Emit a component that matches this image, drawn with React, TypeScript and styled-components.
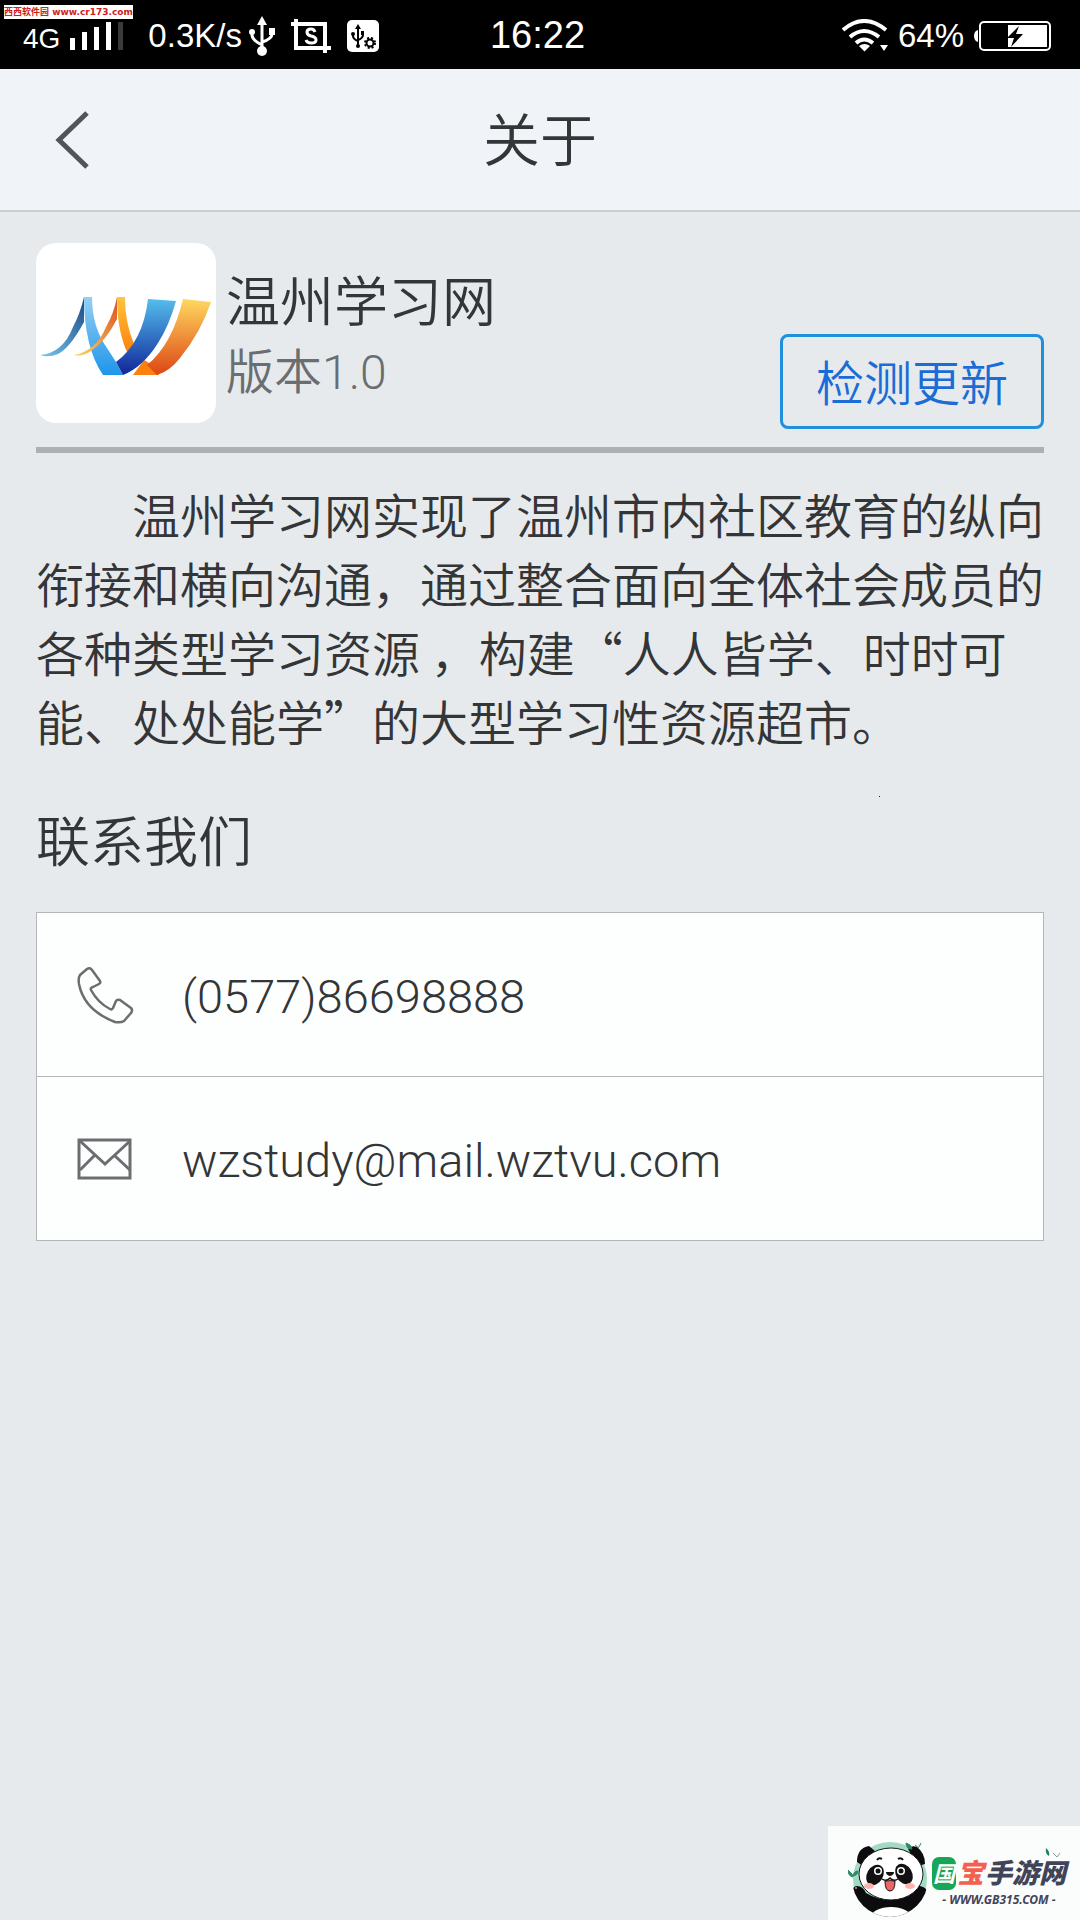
import React from 'react';
import styled, { createGlobalStyle } from 'styled-components';

const GlobalStyle = createGlobalStyle`
  * {
    box-sizing: border-box;
  }

  body {
    margin: 0;
    background: #e6eaed;
    color: #333537;
    font-family: Roboto, 'Noto Sans CJK SC', sans-serif;
    font-weight: 350;
  }
`;

const Page = styled.div`
  position: relative;
  display: flex;
  flex-direction: column;
  min-height: 100vh;
`;

const StatusBar = styled.div`
  display: flex;
  align-items: center;
  justify-content: space-between;
  height: 69px;
  padding: 2px 28px 0 23px;
  background: #000;
  color: #fff;
  font-family: 'Liberation Sans', sans-serif;
  font-weight: 400;
  font-size: 33px;
`;

const StatusGroup = styled.div<{ $end?: boolean }>`
  display: flex;
  flex: 1;
  align-items: center;
  justify-content: ${({ $end }) => ($end ? 'flex-end' : 'flex-start')};
  gap: 10px;
`;

const Network = styled.span`
  padding-top: 6px;
  font-size: 28px;
`;

const Speed = styled.span`
  padding-left: 14px;
`;

const StatusIcons = styled.div`
  display: flex;
  align-items: center;
  gap: 16px;
  margin-left: -3px;
`;

const Clock = styled.span`
  font-size: 38px;
`;

const SourceBadge = styled.div`
  position: absolute;
  top: 5px;
  left: 4px;
  background: #fff;
  color: #d0201c;
  font-family: 'DejaVu Sans', 'Noto Sans CJK SC', sans-serif;
  font-size: 9px;
  font-weight: 700;
  line-height: 14px;
  white-space: nowrap;
`;

const Header = styled.header`
  display: grid;
  grid-template-columns: 1fr auto 1fr;
  align-items: center;
  height: 143px;
  padding: 0 36px;
  background: #f0f3f8;
  border-bottom: 2px solid #cbcfd2;
`;

const BackButton = styled.button`
  display: flex;
  justify-self: start;
  padding: 12px 16px;
  background: none;
  border: none;
  cursor: pointer;
`;

const Title = styled.h1`
  margin: 0;
  padding-top: 4px;
  font-size: 57px;
  font-weight: inherit;
  line-height: 72px;
`;

const Content = styled.main`
  padding: 31px 36px;
`;

const AppInfo = styled.section`
  display: flex;
  gap: 10px;
  padding-bottom: 24px;
  border-bottom: 6px solid #adb0b2;
`;

const LogoCard = styled.div`
  width: 180px;
  height: 180px;
  background: #fff;
  border-radius: 20px;
`;

const AppText = styled.div`
  flex: 1;
  padding-top: 25px;
`;

const AppName = styled.h2`
  margin: 0;
  font-size: 54px;
  font-weight: inherit;
  line-height: 72px;
`;

const Version = styled.p`
  margin: 0;
  color: #6b6e70;
  font-size: 48px;
  line-height: 66px;
`;

const UpdateButton = styled.button`
  align-self: flex-end;
  height: 95px;
  margin-bottom: -6px;
  padding: 0 33px 4px;
  background: none;
  border: 3px solid #1f90dc;
  border-radius: 8px;
  color: #1a6cd6;
  font: inherit;
  font-size: 48px;
  cursor: pointer;
`;

const Description = styled.p`
  margin: 26px 0 0;
  font-family: 'Noto Sans CJK SC', sans-serif;
  font-size: 48px;
  line-height: 69px;
  text-indent: 2em;
`;

const ContactHeading = styled.div`
  display: flex;
  align-items: flex-start;
  justify-content: space-between;
  margin-top: 41px;
  padding-right: 164px;
`;

const Speck = styled.span`
  width: 1px;
  height: 1px;
  background: #101080;
`;

const ContactTitle = styled.h2`
  margin: 12px 0 0;
  font-size: 54px;
  font-weight: inherit;
  line-height: 72px;
`;

const ContactList = styled.div`
  margin-top: 32px;
  background: #fdfefe;
  border: 1px solid #b4b7b9;
`;

const ContactRow = styled.a`
  display: flex;
  align-items: center;
  gap: 48px;
  height: 163px;
  padding: 0 39px;
  color: inherit;
  font-size: 47px;
  text-decoration: none;

  & + & {
    border-top: 1px solid #b4b7b9;
    height: 164px;
  }
`;

const ContactValue = styled.span`
  padding-top: 4px;
  font-weight: 300;
`;

const SiteMark = styled.div`
  position: absolute;
  right: 0;
  bottom: 0;
  display: flex;
  align-items: flex-start;
  height: 94px;
  padding: 12px 14px 0 20px;
  background: #fbfcfc;
`;

const SiteText = styled.div`
  display: flex;
  flex-direction: column;
  align-items: center;
  padding-top: 17px;
  color: #414459;
  font-family: 'Noto Sans', 'Noto Sans CJK SC', sans-serif;
  font-style: italic;
  font-weight: 700;
`;

const SiteName = styled.div`
  display: flex;
  align-items: center;
  gap: 1px;
  font-size: 27px;
  font-weight: 900;
  line-height: 36px;
`;

const GreenTile = styled.span`
  padding: 0 1px;
  background: #18a558;
  border-radius: 7px;
  color: #fff;
  font-size: 22px;
  font-weight: 700;
  line-height: 33px;
`;

const RedChar = styled.span`
  color: #f4604f;
`;

const SiteUrl = styled.div`
  font-size: 12px;
  line-height: 18px;
`;

const LeafMark = styled.svg`
  position: absolute;
  top: 21px;
  right: 18px;
`;

const SignalIcon = () => (
  <svg width="54" height="28" viewBox="0 0 54 28" fill="#fff" aria-hidden="true">
    <rect x="0" y="16" width="5" height="12" />
    <rect x="12" y="10" width="5" height="18" />
    <rect x="24" y="5" width="5" height="23" />
    <rect x="36" y="0" width="5" height="28" />
    <rect x="48" y="0" width="5" height="28" fill="#3a3a3a" />
  </svg>
);

const UsbIcon = () => (
  <svg width="26" height="40" viewBox="0 0 26 40" aria-hidden="true">
    <path d="M13 8v26M3 16v3q0 5 10 10M23 16v2q0 5-10 8" fill="none" stroke="#fff" strokeWidth="3" />
    <path d="M13 0l5 9H8z" fill="#fff" />
    <circle cx="13" cy="35" r="5" fill="#fff" />
    <circle cx="3" cy="16" r="3" fill="#fff" />
    <rect x="20" y="12" width="6" height="7" fill="#fff" />
  </svg>
);

const ScreenshotIcon = () => (
  <svg width="40" height="34" viewBox="0 0 40 34" fill="none" stroke="#fff" aria-hidden="true">
    <path d="M0 5h34v29M5 0v29h35" strokeWidth="4" />
    <path d="M24 13q-1-3-4-3-4 0-4 3 0 3 4 4 5 1 5 4 0 3-5 3-4 0-5-3" strokeWidth="3" />
  </svg>
);

const UsbSettingsIcon = () => (
  <svg width="32" height="32" viewBox="0 0 32 32" aria-hidden="true">
    <rect width="32" height="32" rx="5" fill="#fff" />
    <path d="M11 8v17M6 14v2q0 3 5 5M16 13v2q0 3-5 5" fill="none" stroke="#000" strokeWidth="2" />
    <path d="M11 4l3 5H8z" />
    <circle cx="11" cy="26" r="2" />
    <circle cx="6" cy="14" r="2" />
    <rect x="14" y="11" width="3" height="4" />
    <circle cx="23" cy="23" r="3.500" fill="none" stroke="#000" strokeWidth="2" />
    <circle cx="23" cy="23" r="5" fill="none" stroke="#000" strokeWidth="2" strokeDasharray="2 2" />
  </svg>
);

const WifiIcon = () => (
  <svg width="46" height="33" viewBox="0 0 46 33" fill="none" stroke="#fff" strokeWidth="4" aria-hidden="true">
    <path d="M1 11Q22-7 44 11" />
    <path d="M8 18Q22 6 37 18" />
    <path d="M14 24Q22 17 31 24" />
    <path d="M17 27q5.500-4 11 0l-5.500 5.500z" fill="#fff" stroke="none" />
    <path d="M38 26h8l-4 6z" fill="#fff" stroke="none" />
  </svg>
);

const BatteryIcon = () => (
  <svg width="78" height="30" viewBox="0 0 78 30" aria-hidden="true">
    <path d="M4 9v12q-4-1-4-6t4-6z" fill="#fff" />
    <rect x="6" y="1" width="70" height="28" rx="4" fill="none" stroke="#fff" strokeWidth="2" />
    <rect x="34" y="4" width="39" height="22" fill="#fff" />
    <path d="M45 5L33 17h7l-3 9 12-13h-7z" />
  </svg>
);

const BackIcon = () => (
  <svg width="38" height="58" viewBox="0 0 38 58" fill="none" stroke="#515558" strokeWidth="5" aria-hidden="true">
    <path d="M35 2L7 29l28 27" />
  </svg>
);

const LogoIcon = () => (
  <svg width="180" height="180" viewBox="0 0 180 180" role="img" aria-label="温州学习网">
    <defs>
      <linearGradient id="deepBlue" x1="0" y1="0" x2="0" y2="1">
        <stop offset="0" stopColor="#55bdec" />
        <stop offset="1" stopColor="#10259a" />
      </linearGradient>
      <linearGradient id="orange" x1="0" y1="0" x2="0" y2="1">
        <stop offset="0" stopColor="#ffd95f" />
        <stop offset="1" stopColor="#dd4514" />
      </linearGradient>
      <linearGradient id="sky" x1="0" y1="0" x2="0" y2="1">
        <stop offset="0" stopColor="#94cff5" />
        <stop offset="1" stopColor="#1d96ea" />
      </linearGradient>
      <linearGradient id="blueTail" x1="0" y1="1" x2="1" y2="0">
        <stop offset="0" stopColor="#77c8f2" />
        <stop offset="1" stopColor="#1b4a83" />
      </linearGradient>
      <linearGradient id="orangeTail" x1="0" y1="1" x2="1" y2="0">
        <stop offset="0" stopColor="#ffd763" />
        <stop offset="1" stopColor="#d85224" />
      </linearGradient>
      <linearGradient id="amber" x1="0" y1="0" x2="0" y2="1">
        <stop offset="0" stopColor="#ffc53a" />
        <stop offset="1" stopColor="#fb7d0c" />
      </linearGradient>
    </defs>
    <path d="M81 54h8q0 26 9 47l-5 12Q81 90 81 54z" fill="url(#amber)" />
    <path d="M108 117l7 4 8 11H97z" fill="#fb800e" />
    <path d="M147 56l28 3q-10 30-31 56-10 13-23 17l-10-10q25-20 36-66z" fill="url(#orange)" />
    <path d="M48 54h8q0 30 15 51l9 14 7 13H67Q48 104 48 54z" fill="url(#sky)" />
    <path d="M112 56l28 2q-7 25-18 42-15 24-35 32l-7-13q27-20 32-63z" fill="url(#deepBlue)" />
    <path d="M4 112Q27 110 37 84q7-13 11-30v25Q34 105 22 111q-10 4-18 1z" fill="url(#blueTail)" />
    <path d="M38 112q22-4 32-28 8-14 11-30v22Q70 98 55 108q-9 6-17 4z" fill="url(#orangeTail)" />
  </svg>
);

const PhoneIcon = () => (
  <svg width="58" height="58" viewBox="0 0 58 58" fill="none" stroke="#6b6e70" strokeWidth="2.500" strokeLinejoin="round" aria-hidden="true">
    <path d="M11 3q3-2 5 1l8 11q1 2-1 3l-6 3q-3 1-2 3 7 13 19 19 2 1 3-1l3-7q1-2 4-1l11 8q2 2 0 5l-7 8q-3 2-9 1Q8 44 3 18q-1-6 1-9z" />
  </svg>
);

const MailIcon = () => (
  <svg width="58" height="42" viewBox="0 0 58 42" fill="none" stroke="#6b6e70" strokeWidth="3" aria-hidden="true">
    <rect x="3" y="2" width="51" height="38" />
    <path d="M4 3l25 23L54 3M4 32l15-15M54 32L38 17" />
  </svg>
);

const PandaIcon = () => (
  <svg width="84" height="82" viewBox="0 0 84 82" aria-hidden="true">
    <clipPath id="pandaClip">
      <circle cx="42" cy="41" r="38" />
    </clipPath>
    <circle cx="42" cy="41" r="37" fill="#a3dac3" />
    <g clipPath="url(#pandaClip)">
      <path d="M4 56q0-8 5-8 6 0 9 7 24 14 45-1 3-7 9-6 7 1 8 8v30H4z" fill="#0c0c0e" />
      <ellipse cx="43" cy="79" rx="20" ry="10" fill="#fff" />
    </g>
    <path d="M9 24Q9 10 21 8l6 5-12 15zM60 11q3-4 9-2 8 6 8 17l-7 2z" fill="#0c0c0e" />
    <ellipse cx="43" cy="36" rx="32" ry="26" fill="#fff" stroke="#18181a" />
    <ellipse cx="27" cy="37" rx="8" ry="11" fill="#111" transform="rotate(30 27 37)" />
    <ellipse cx="56" cy="36" rx="8" ry="11" fill="#111" transform="rotate(-30 56 36)" />
    <circle cx="30" cy="33" r="4" fill="#fff" />
    <circle cx="53" cy="33" r="4" fill="#fff" />
    <circle cx="30" cy="33" r="2.500" fill="#111" />
    <circle cx="53" cy="33" r="2.500" fill="#111" />
    <path d="M29 22q2-3 5-1M50 21q3-2 5 1" fill="none" stroke="#111" strokeWidth="2" />
    <path d="M38 34h8q0 3-4 4-4-1-4-4z" fill="#111" />
    <path d="M34 41q4 3 8-1 4 4 8 1" fill="none" stroke="#111" strokeWidth="1.500" />
    <path d="M37 43q5 0 5-1 1 1 5 1 0 10-5 10t-5-10z" fill="#ef6464" stroke="#111" />
    <ellipse cx="21" cy="48" rx="5" ry="3" fill="#ffb2ac" />
    <ellipse cx="62" cy="48" rx="5" ry="3" fill="#ffb2ac" />
    <circle cx="8" cy="50" r="1" fill="#f28b82" />
    <path d="M0 32l4 4 1 3q-5-1-5-7zM5 38q1-5 5-5 0 4-5 5zM58 5q5 1 6 6-6 0-6-6zM67 7l4 3M71 9l2-4" fill="#2d8a65" stroke="#2d8a65" />
  </svg>
);

const App: React.FC = () => {
  return (
    <>
      <GlobalStyle />
      <Page>
        <StatusBar>
          <StatusGroup>
            <Network>4G</Network>
            <SignalIcon />
            <Speed>0.3K/s</Speed>
            <StatusIcons>
              <UsbIcon />
              <ScreenshotIcon />
              <UsbSettingsIcon />
            </StatusIcons>
          </StatusGroup>
          <Clock>16:22</Clock>
          <StatusGroup $end>
            <WifiIcon />
            <span>64%</span>
            <BatteryIcon />
          </StatusGroup>
        </StatusBar>
        <SourceBadge>西西软件园 www.cr173.com</SourceBadge>

        <Header>
          <BackButton type="button" aria-label="返回">
            <BackIcon />
          </BackButton>
          <Title>关于</Title>
        </Header>

        <Content>
          <AppInfo>
            <LogoCard>
              <LogoIcon />
            </LogoCard>
            <AppText>
              <AppName>温州学习网</AppName>
              <Version>版本1.0</Version>
            </AppText>
            <UpdateButton type="button">检测更新</UpdateButton>
          </AppInfo>

          <Description>
            温州学习网实现了温州市内社区教育的纵向衔接和横向沟通，通过整合面向全体社会成员的各种类型学习资源 ，构建“人人皆学、时时可能、处处能学”的大型学习性资源超市。
          </Description>

          <ContactHeading>
            <ContactTitle>联系我们</ContactTitle>
            <Speck />
          </ContactHeading>

          <ContactList>
            <ContactRow href="tel:057786698888">
              <PhoneIcon />
              <ContactValue>(0577)86698888</ContactValue>
            </ContactRow>
            <ContactRow href="mailto:wzstudy@mail.wztvu.com">
              <MailIcon />
              <ContactValue>wzstudy@mail.wztvu.com</ContactValue>
            </ContactRow>
          </ContactList>
        </Content>

        <SiteMark>
          <PandaIcon />
          <SiteText>
            <SiteName>
              <GreenTile>国</GreenTile>
              <RedChar>宝</RedChar>
              <span>手游网</span>
            </SiteName>
            <SiteUrl>- WWW.GB315.COM -</SiteUrl>
          </SiteText>
          <LeafMark width="18" height="12" viewBox="0 0 18 12" aria-hidden="true">
            <path d="M2 1q4 3 3 8-4-2-3-8z" fill="#18845a" />
            <path d="M9 6l4 4 3-4" fill="none" stroke="#8a9a9a" />
          </LeafMark>
        </SiteMark>
      </Page>
    </>
  );
};

export default App;
